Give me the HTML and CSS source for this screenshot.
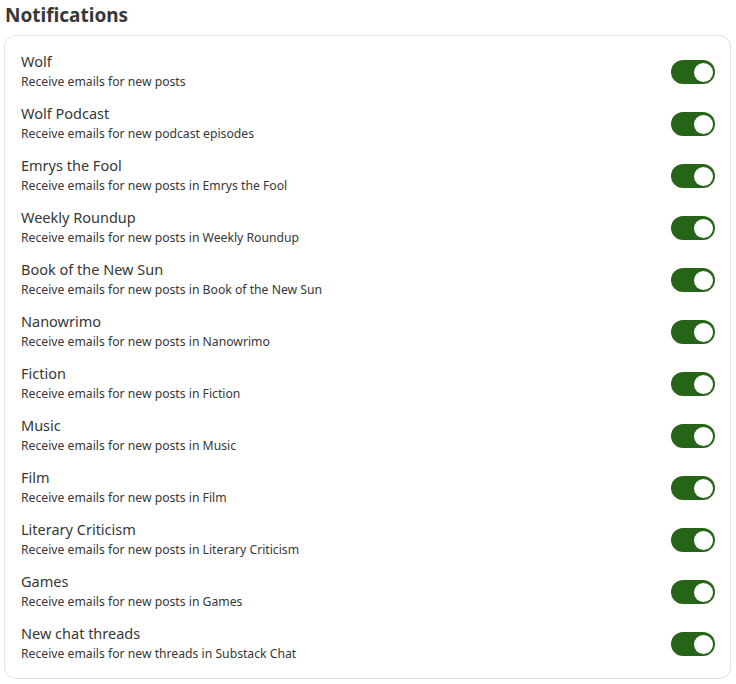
FILE: index.html
```html
<!DOCTYPE html>
<html lang="en">
<head>
  <meta charset="UTF-8">
  <title>Notifications</title>
  <link rel="stylesheet" href="styles.css">
</head>
<body>

  <h2 class="section-title">Notifications</h2>

  <!-- Notification toggles -->
  <div class="card">
    <div class="row">
      <div class="row-text">
        <div class="row-title">Wolf</div>
        <div class="row-desc">Receive emails for new posts</div>
      </div>
      <span class="toggle"><span class="knob"></span></span>
    </div>
    <div class="row">
      <div class="row-text">
        <div class="row-title">Wolf Podcast</div>
        <div class="row-desc">Receive emails for new podcast episodes</div>
      </div>
      <span class="toggle"><span class="knob"></span></span>
    </div>
    <div class="row">
      <div class="row-text">
        <div class="row-title">Emrys the Fool</div>
        <div class="row-desc">Receive emails for new posts in Emrys the Fool</div>
      </div>
      <span class="toggle"><span class="knob"></span></span>
    </div>
    <div class="row">
      <div class="row-text">
        <div class="row-title">Weekly Roundup</div>
        <div class="row-desc">Receive emails for new posts in Weekly Roundup</div>
      </div>
      <span class="toggle"><span class="knob"></span></span>
    </div>
    <div class="row">
      <div class="row-text">
        <div class="row-title">Book of the New Sun</div>
        <div class="row-desc">Receive emails for new posts in Book of the New Sun</div>
      </div>
      <span class="toggle"><span class="knob"></span></span>
    </div>
    <div class="row">
      <div class="row-text">
        <div class="row-title">Nanowrimo</div>
        <div class="row-desc">Receive emails for new posts in Nanowrimo</div>
      </div>
      <span class="toggle"><span class="knob"></span></span>
    </div>
    <div class="row">
      <div class="row-text">
        <div class="row-title">Fiction</div>
        <div class="row-desc">Receive emails for new posts in Fiction</div>
      </div>
      <span class="toggle"><span class="knob"></span></span>
    </div>
    <div class="row">
      <div class="row-text">
        <div class="row-title">Music</div>
        <div class="row-desc">Receive emails for new posts in Music</div>
      </div>
      <span class="toggle"><span class="knob"></span></span>
    </div>
    <div class="row">
      <div class="row-text">
        <div class="row-title">Film</div>
        <div class="row-desc">Receive emails for new posts in Film</div>
      </div>
      <span class="toggle"><span class="knob"></span></span>
    </div>
    <div class="row">
      <div class="row-text">
        <div class="row-title">Literary Criticism</div>
        <div class="row-desc">Receive emails for new posts in Literary Criticism</div>
      </div>
      <span class="toggle"><span class="knob"></span></span>
    </div>
    <div class="row">
      <div class="row-text">
        <div class="row-title">Games</div>
        <div class="row-desc">Receive emails for new posts in Games</div>
      </div>
      <span class="toggle"><span class="knob"></span></span>
    </div>
    <div class="row">
      <div class="row-text">
        <div class="row-title">New chat threads</div>
        <div class="row-desc">Receive emails for new threads in Substack Chat</div>
      </div>
      <span class="toggle"><span class="knob"></span></span>
    </div>
  </div>

</body>
</html>
```

FILE: styles.css
```css
/* Page styling */
body {
  font-family: 'Noto Sans', 'Open Sans', sans-serif;
  background-color: #ffffff;
  color: #363737;
  margin: 0;
  padding: 4px 5px 0 4px;
}

.section-title {
  font-size: 19px;
  font-weight: 700;
  line-height: 22px;
  margin: 0 0 9px 1px;
  color: #363737;
}

/* Card holding the toggles */
.card {
  border: 1px solid #e3e3e3;
  border-radius: 12px;
  padding: 15px 15px 15px 16px;
  display: flex;
  flex-direction: column;
  gap: 12px;
}

.row {
  display: flex;
  align-items: center;
  justify-content: space-between;
}

.row-title {
  font-size: 14.5px;
  line-height: 21px;
  color: #363737;
}

.row-desc {
  font-size: 12.2px;
  line-height: 19px;
  color: #363737;
}

/* Switch */
.toggle {
  width: 44px;
  height: 24px;
  margin-top: 2px;
  border-radius: 12px;
  background-color: #26641a;
  display: flex;
  align-items: center;
  justify-content: flex-end;
  padding: 0 2px;
  box-sizing: border-box;
}

.knob {
  width: 19px;
  height: 19px;
  border-radius: 50%;
  background-color: #ffffff;
}
```
